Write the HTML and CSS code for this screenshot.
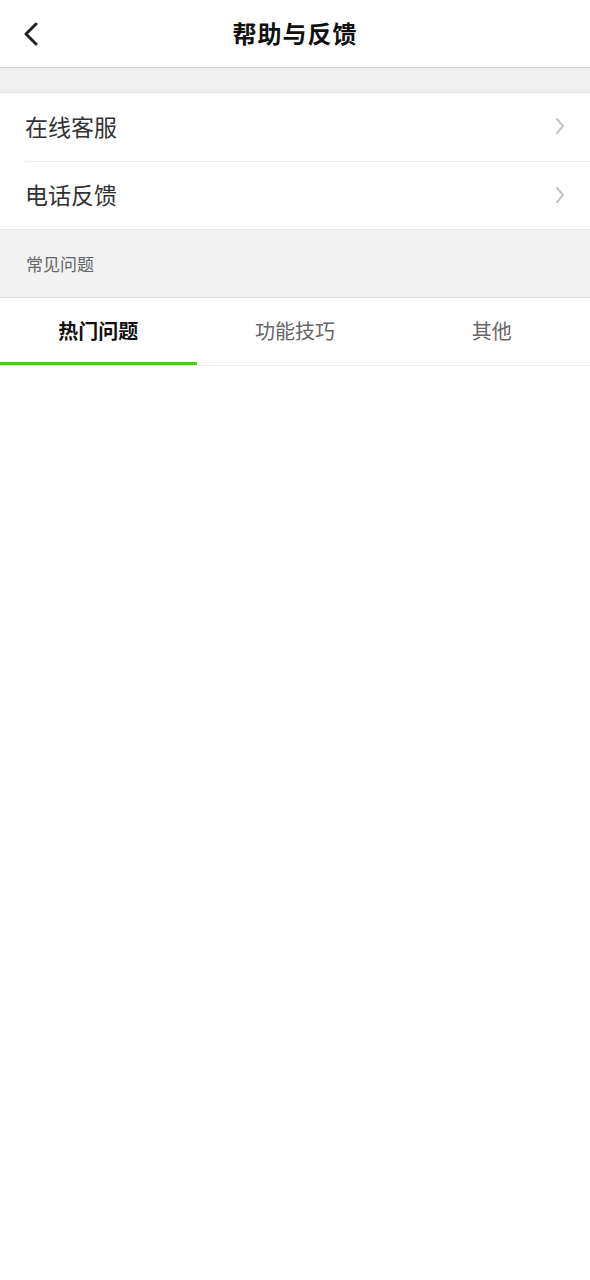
FILE: index.html
```html
<!DOCTYPE html>
<html lang="zh">
<head>
<meta charset="utf-8">
<link rel="stylesheet" href="styles.css">
</head>
<body>
<header class="nav">
  <span class="back">
    <svg width="16" height="24" viewBox="0 0 16 24"><path d="M13 2 L3 12 L13 22" fill="none" stroke="#222" stroke-width="3" stroke-linecap="round" stroke-linejoin="round"/></svg>
  </span>
  <h1 class="title">帮助与反馈</h1>
</header>
<div class="gap"></div>
<ul class="list">
  <li class="item"><span>在线客服</span><svg class="arrow" width="10" height="18" viewBox="0 0 10 18"><path d="M2 2 L8 9 L2 16" fill="none" stroke="#c4c4c4" stroke-width="2" stroke-linecap="round" stroke-linejoin="round"/></svg></li>
  <li class="item"><span>电话反馈</span><svg class="arrow" width="10" height="18" viewBox="0 0 10 18"><path d="M2 2 L8 9 L2 16" fill="none" stroke="#c4c4c4" stroke-width="2" stroke-linecap="round" stroke-linejoin="round"/></svg></li>
</ul>
<div class="section">常见问题</div>
<nav class="tabs">
  <div class="tab active">热门问题</div>
  <div class="tab">功能技巧</div>
  <div class="tab">其他</div>
</nav>
</body>
</html>
```
FILE: styles.css
```css
* { box-sizing: border-box; }
html, body { margin: 0; padding: 0; background: #fff; }
body {
  font-family: "Noto Sans CJK SC", "Noto Sans", sans-serif;
  color: #222;
}
.nav {
  position: relative;
  height: 68px;
  display: flex;
  align-items: center;
  justify-content: center;
  border-bottom: 1px solid #d4d4d4;
  padding-bottom: 2px;
}
.back {
  position: absolute;
  left: 23px;
  top: 22px;
  display: flex;
}
.title {
  margin: 0;
  font-size: 24px;
  font-weight: 700;
  color: #111;
  letter-spacing: 1px;
}
.gap {
  height: 25px;
  background: #f0f0f0;
  border-bottom: 1px solid #e2e2e2;
}
.list { list-style: none; margin: 0; padding: 0 0 0 25px; }
.item {
  height: 68px;
  display: flex;
  align-items: center;
  justify-content: space-between;
  padding-right: 25px;
  padding-bottom: 3px;
  font-size: 23px;
  color: #333;
}
.item .arrow { margin-top: 1px; }
.item + .item { border-top: 1px solid #eeeeee; }
.section {
  height: 69px;
  background: #f2f2f2;
  border-top: 1px solid #e6e6e6;
  border-bottom: 1px solid #e2e2e2;
  padding-left: 26px;
  display: flex;
  align-items: center;
  font-size: 17px;
  color: #666;
}
.tabs {
  display: flex;
  height: 68px;
  border-bottom: 1px solid #ececec;
}
.tab {
  flex: 1;
  display: flex;
  align-items: center;
  justify-content: center;
  font-size: 20px;
  color: #666;
  border-bottom: 3px solid transparent;
  padding-top: 1px;
}
.tab.active {
  color: #111;
  font-weight: 700;
  border-bottom-color: #52c41a;
}
```
